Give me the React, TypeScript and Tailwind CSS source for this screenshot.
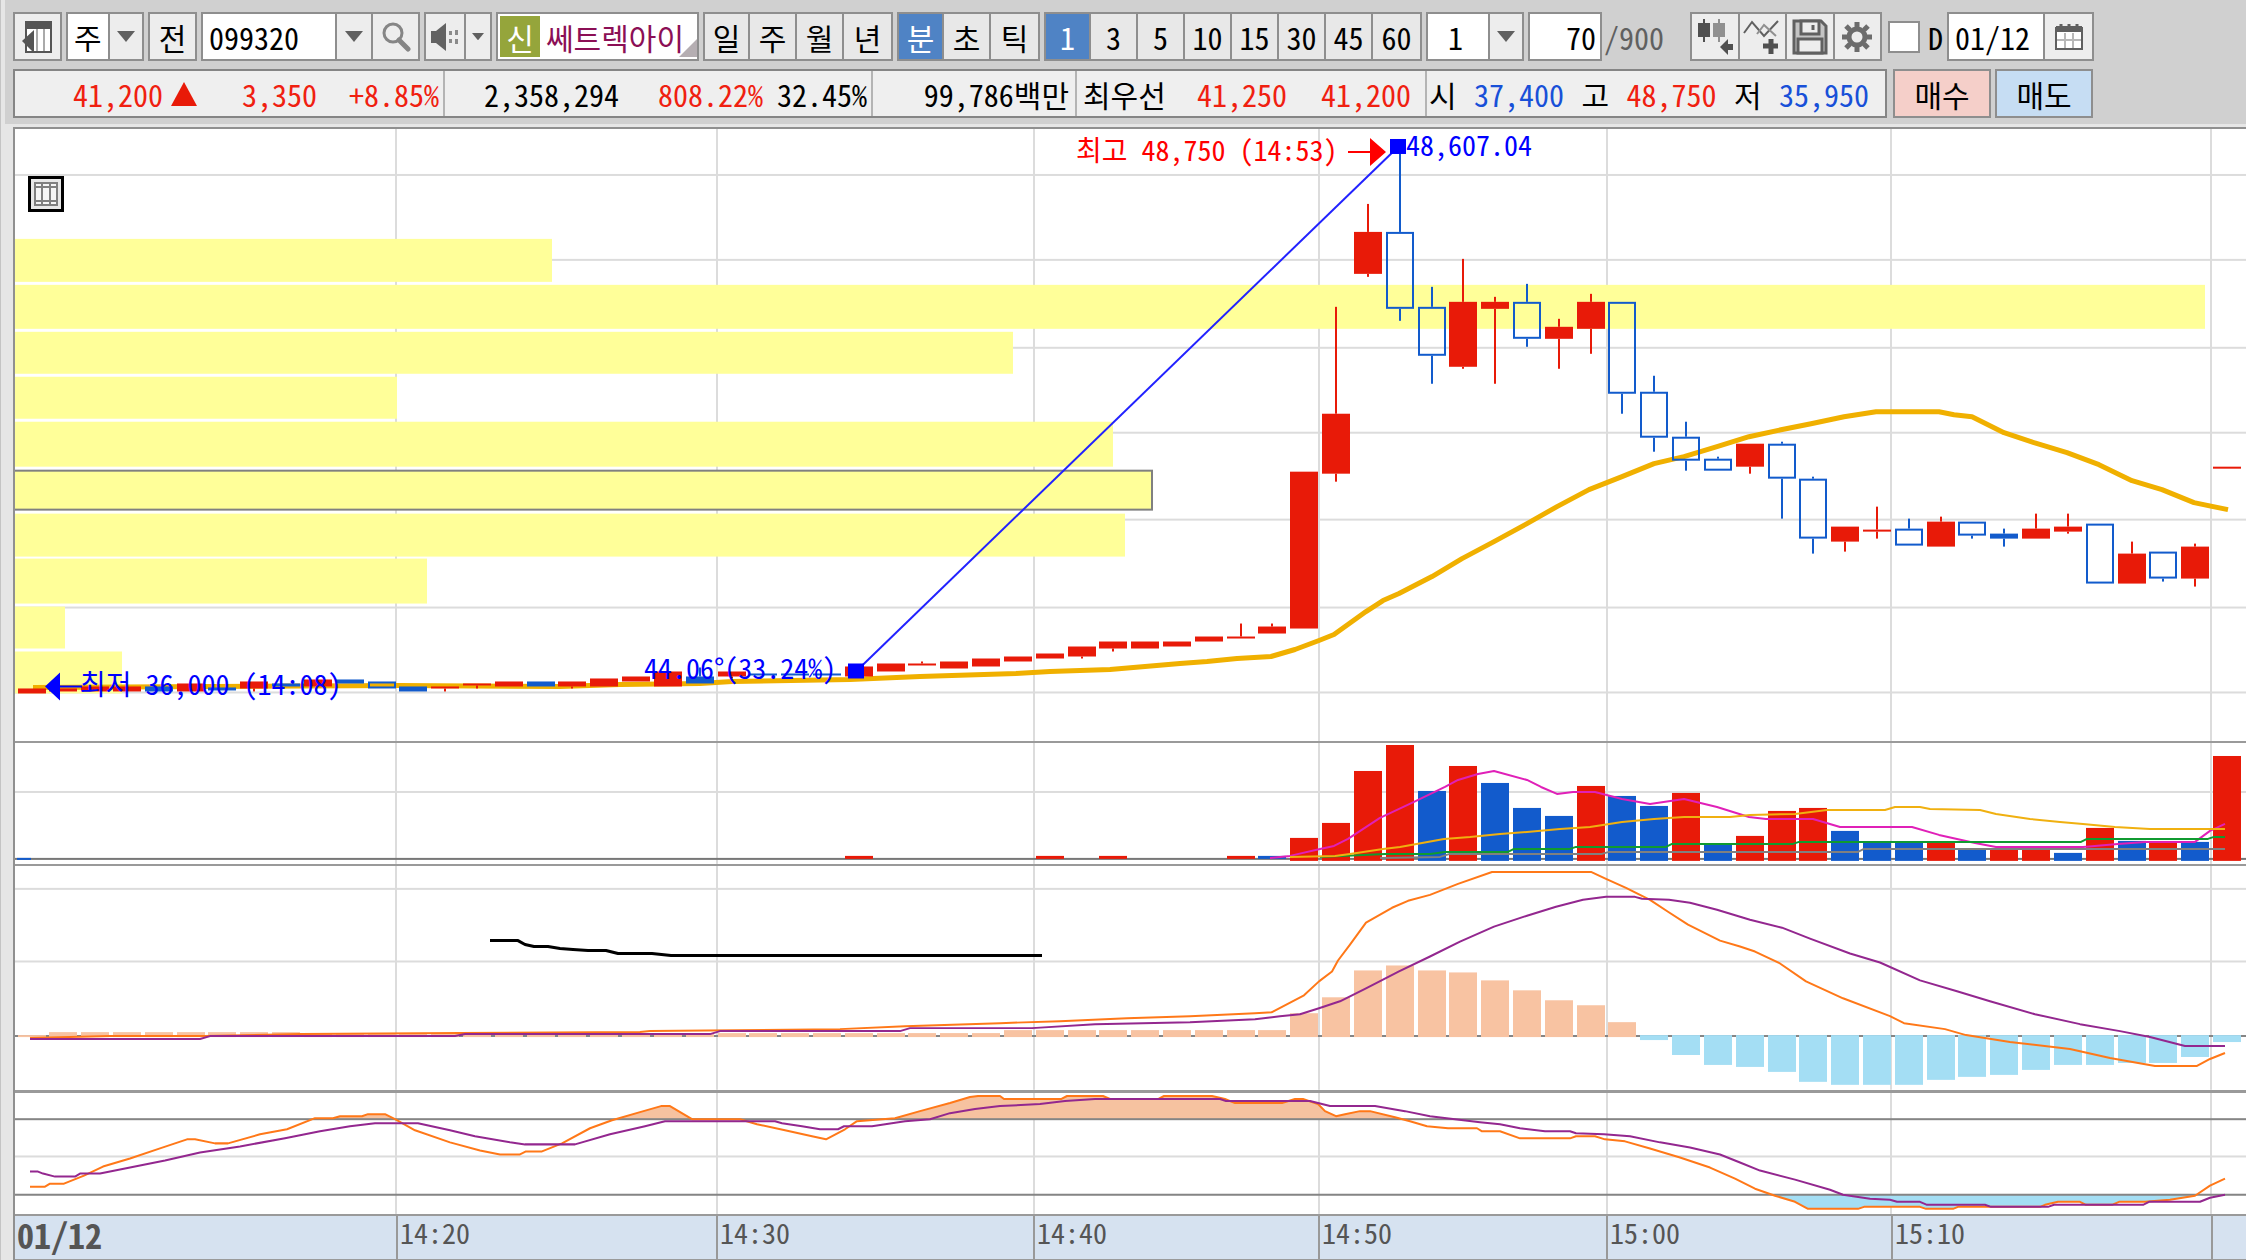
import React from "react";

type Pt = [number, number];

const X0 = 15;
const X1 = 2246;
const W = X1 - X0;

const RED = "#e81a08";
const BLUE = "#125bcc";
const GRID = "#dcdcdc";

const gridX = [396, 717, 1034, 1319, 1607, 1891, 2211];

const center = (i: number) => Math.round(31.5 + (i * (2227 - 31.5)) / 69);

/* Candles: [kind, bodyTop, bodyBottom, wickTop, wickBottom]; r = red, b = solid blue, h = hollow blue */
type Candle = ["r" | "b" | "h", number, number, number, number];
const candles: Candle[] = [
  ["r", 689, 694, 689, 694], ["r", 689, 692, 689, 692], ["r", 687, 692, 687, 692], ["r", 687, 692, 687, 692],
  ["b", 687, 692, 687, 692], ["r", 684, 692, 684, 692], ["b", 688, 691, 688, 691], ["r", 682, 689, 682, 692],
  ["b", 684, 687, 684, 687], ["r", 680, 687, 680, 687], ["b", 680, 684, 680, 684], ["h", 682, 689, 682, 689],
  ["b", 687, 692, 687, 692], ["r", 687, 689, 687, 692], ["r", 684, 686, 684, 689], ["r", 682, 687, 682, 687],
  ["b", 682, 687, 682, 687], ["r", 682, 687, 682, 689], ["r", 679, 687, 679, 687], ["r", 677, 682, 677, 682],
  ["r", 672, 687, 672, 687], ["b", 677, 684, 668, 684], ["r", 672, 677, 672, 679], ["b", 674, 676, 674, 676],
  ["b", 674, 676, 674, 676], ["b", 674, 676, 674, 676], ["r", 667, 677, 667, 677], ["r", 664, 672, 664, 672],
  ["r", 664, 666, 662, 666], ["r", 662, 669, 662, 669], ["r", 659, 667, 659, 667], ["r", 657, 662, 657, 662],
  ["r", 654, 659, 654, 659], ["r", 647, 657, 647, 659], ["r", 642, 649, 642, 652], ["r", 642, 649, 642, 649],
  ["r", 642, 647, 642, 647], ["r", 637, 642, 637, 642], ["r", 637, 639, 624, 639], ["r", 627, 634, 624, 634],
  ["r", 472, 629, 472, 629], ["r", 414, 474, 307, 482], ["r", 232, 274, 204, 277], ["h", 232, 309, 150, 321],
  ["h", 307, 356, 287, 384], ["r", 302, 367, 259, 369], ["r", 302, 309, 297, 384], ["h", 302, 339, 284, 347],
  ["r", 327, 339, 319, 369], ["r", 302, 329, 294, 354], ["h", 302, 394, 302, 414], ["h", 392, 438, 376, 452],
  ["h", 437, 461, 422, 471], ["h", 459, 471, 457, 471], ["r", 444, 467, 444, 474], ["h", 444, 479, 442, 519],
  ["h", 479, 539, 477, 554], ["r", 527, 542, 527, 552], ["r", 530, 532, 507, 539], ["h", 529, 546, 519, 546],
  ["r", 522, 547, 517, 547], ["h", 522, 536, 522, 539], ["b", 534, 539, 529, 547], ["r", 529, 539, 514, 539],
  ["r", 527, 532, 514, 534], ["h", 524, 584, 524, 584], ["r", 554, 584, 542, 584], ["h", 552, 579, 552, 582],
  ["r", 547, 579, 544, 587], ["r", 467, 469, 467, 469],
];

/* Price distribution: [top, bottom, right, outlined] */
const profile: [number, number, number, boolean][] = [
  [239, 282, 552, false], [285, 329, 2205, false], [332, 374, 1013, false], [377, 419, 397, false],
  [422, 467, 1113, false], [471, 510, 1152, true], [514, 557, 1125, false], [559, 604, 427, false],
  [607, 649, 65, false], [652, 694, 122, false],
];

const movingAverage: Pt[] = [
  [33, 688], [400, 686], [560, 687], [620, 685], [700, 684], [732, 682], [850, 680], [920, 677], [1016, 674], [1050, 672],
  [1110, 670], [1145, 667], [1180, 664], [1207, 662], [1237, 659], [1271, 657], [1295, 650], [1319, 641], [1334, 635],
  [1366, 612], [1383, 601], [1399, 594], [1432, 577], [1462, 559], [1494, 542], [1527, 524], [1557, 507], [1589, 490],
  [1622, 477], [1654, 464], [1684, 457], [1717, 447], [1749, 437], [1781, 430], [1811, 424], [1844, 417], [1876, 412],
  [1939, 412], [1954, 415], [1972, 417], [2004, 433], [2034, 443], [2067, 453], [2099, 465], [2132, 481], [2162, 490],
  [2194, 503], [2228, 510],
];

/* Volume bars: [index, top, colour] */
const volume: [number, number, "r" | "b"][] = [
  [26, 857, "r"], [32, 857, "r"], [34, 857, "r"], [38, 857, "r"], [39, 857, "b"],
  [40, 839, "r"], [41, 824, "r"], [42, 772, "r"], [43, 746, "r"], [44, 792, "b"], [45, 767, "r"], [46, 784, "b"],
  [47, 809, "b"], [48, 817, "b"], [49, 787, "r"], [50, 797, "b"], [51, 807, "b"], [52, 794, "r"], [53, 846, "b"],
  [54, 837, "r"], [55, 812, "r"], [56, 809, "r"], [57, 832, "b"], [58, 843, "b"], [59, 843, "b"], [60, 843, "r"],
  [61, 851, "b"], [62, 851, "r"], [63, 851, "r"], [64, 854, "b"], [65, 829, "r"], [66, 842, "b"], [67, 843, "r"],
  [68, 843, "b"], [69, 757, "r"],
];

const volMagenta: Pt[] = [
  [1270, 859], [1290, 857], [1320, 850], [1334, 847], [1348, 840], [1380, 819], [1414, 803], [1445, 788], [1458, 781],
  [1478, 775], [1494, 772], [1527, 781], [1541, 788], [1557, 795], [1573, 793], [1595, 793], [1622, 800], [1650, 805],
  [1684, 800], [1717, 808], [1749, 818], [1766, 820], [1813, 820], [1840, 828], [1912, 828], [1939, 836], [1975, 844],
  [1996, 848], [2083, 848], [2118, 845], [2145, 843], [2195, 843], [2210, 832], [2225, 825],
];
const volYellow: Pt[] = [
  [1290, 858], [1335, 857], [1350, 855], [1383, 850], [1400, 848], [1444, 840], [1470, 838], [1500, 835], [1527, 833],
  [1560, 830], [1590, 828], [1622, 823], [1654, 820], [1684, 818], [1730, 818], [1750, 816], [1795, 815], [1827, 811],
  [1885, 811], [1895, 808], [1920, 808], [1930, 810], [1980, 811], [1996, 815], [2030, 820], [2060, 823], [2083, 825],
  [2115, 828], [2150, 830], [2225, 830],
];
const volGreen: Pt[] = [
  [1320, 858], [1385, 855], [1430, 855], [1445, 853], [1508, 853], [1514, 850], [1570, 850], [1576, 848], [1666, 848],
  [1672, 845], [1793, 845], [1799, 843], [2081, 843], [2087, 840], [2208, 840], [2214, 838], [2225, 838],
];
const volGray: Pt[] = [
  [1380, 859], [1440, 858], [1450, 855], [1602, 855], [1609, 853], [1858, 853], [1864, 850], [2225, 850],
];

/* Histogram edge for each index, measured from the zero line at 1038 */
const histogram: number[] = [
  1037, 1034, 1034, 1034, 1034, 1034, 1034, 1034, 1034, 1035, 1036, 1036, 1036, 1036, 1036, 1036, 1036, 1035, 1035, 1035,
  1035, 1035, 1035, 1035, 1035, 1035, 1035, 1035, 1035, 1035, 1035, 1032, 1032, 1032, 1032, 1032, 1032, 1032, 1032, 1032,
  1015, 999, 972, 967, 972, 974, 982, 992, 1002, 1007, 1024, 1042, 1057, 1067, 1069, 1074, 1084, 1087, 1087, 1087,
  1082, 1079, 1077, 1072, 1067, 1067, 1065, 1065, 1059, 1044,
];

const macd: Pt[] = [
  [30, 1040], [110, 1038], [205, 1038], [300, 1036], [460, 1035], [640, 1034], [650, 1033], [840, 1031], [905, 1028],
  [1000, 1025], [1060, 1023], [1127, 1020], [1190, 1018], [1255, 1015], [1272, 1014], [1304, 997], [1319, 983],
  [1332, 973], [1338, 962], [1350, 946], [1366, 924], [1392, 909], [1408, 902], [1430, 896], [1458, 885], [1492, 873],
  [1591, 873], [1606, 880], [1626, 889], [1650, 901], [1668, 913], [1688, 926], [1720, 942], [1740, 948], [1755, 953],
  [1780, 965], [1806, 983], [1843, 1000], [1890, 1018], [1904, 1025], [1945, 1031], [1966, 1037], [2010, 1044],
  [2070, 1051], [2110, 1060], [2155, 1068], [2197, 1068], [2210, 1061], [2225, 1055],
];
const signal: Pt[] = [
  [30, 1041], [200, 1041], [210, 1038], [455, 1038], [465, 1036], [710, 1036], [720, 1033], [900, 1033], [910, 1030],
  [1032, 1030], [1095, 1026], [1190, 1024], [1255, 1021], [1280, 1018], [1300, 1016], [1319, 1010], [1340, 1003],
  [1366, 990], [1399, 973], [1430, 958], [1460, 943], [1494, 928], [1527, 917], [1556, 908], [1583, 901], [1606, 898],
  [1635, 898], [1642, 900], [1669, 901], [1690, 904], [1717, 911], [1750, 921], [1782, 929], [1810, 940], [1850, 955],
  [1880, 964], [1920, 982], [1957, 993], [1990, 1003], [2035, 1016], [2080, 1026], [2120, 1033], [2150, 1039],
  [2185, 1048], [2225, 1048],
];
const freehand: Pt[] = [
  [490, 942], [518, 942], [525, 946], [534, 948], [548, 948], [560, 950], [573, 951], [588, 952], [606, 952], [618, 955],
  [652, 955], [671, 957], [1042, 957],
];

const stochK: Pt[] = [
  [30, 1188], [45, 1188], [50, 1185], [64, 1185], [84, 1177], [103, 1168], [130, 1160], [160, 1150], [187, 1141],
  [195, 1141], [215, 1145], [228, 1145], [260, 1136], [287, 1131], [315, 1120], [333, 1120], [340, 1118], [362, 1118],
  [368, 1116], [385, 1116], [395, 1121], [415, 1132], [450, 1144], [480, 1152], [500, 1156], [520, 1156], [526, 1153],
  [542, 1153], [562, 1145], [590, 1130], [612, 1122], [640, 1114], [661, 1108], [670, 1108], [692, 1121], [740, 1121],
  [757, 1126], [785, 1132], [812, 1138], [826, 1141], [845, 1131], [857, 1123], [895, 1120], [920, 1113], [950, 1105],
  [970, 1099], [978, 1098], [1000, 1098], [1004, 1101], [1061, 1101], [1067, 1098], [1103, 1098], [1110, 1101],
  [1158, 1101], [1164, 1098], [1212, 1098], [1225, 1101], [1235, 1105], [1282, 1105], [1295, 1101], [1303, 1101],
  [1318, 1106], [1325, 1113], [1336, 1118], [1345, 1116], [1360, 1113], [1370, 1113], [1395, 1119], [1410, 1123],
  [1427, 1128], [1448, 1130], [1477, 1130], [1482, 1133], [1500, 1133], [1520, 1140], [1570, 1140], [1576, 1138],
  [1595, 1138], [1605, 1141], [1625, 1143], [1650, 1150], [1680, 1159], [1710, 1169], [1735, 1180], [1755, 1190],
  [1775, 1197], [1795, 1203], [1808, 1210], [1858, 1210], [1864, 1208], [1920, 1208], [1926, 1210], [1953, 1210],
  [1958, 1208], [2040, 1208], [2045, 1206], [2058, 1203], [2080, 1203], [2086, 1206], [2112, 1206], [2119, 1203],
  [2145, 1203], [2170, 1201], [2195, 1197], [2210, 1187], [2225, 1180],
];
const stochD: Pt[] = [
  [30, 1173], [38, 1173], [43, 1175], [55, 1178], [75, 1178], [80, 1175], [100, 1175], [130, 1169], [165, 1162],
  [200, 1154], [240, 1148], [285, 1140], [320, 1133], [350, 1128], [375, 1125], [418, 1125], [450, 1132], [475, 1138],
  [510, 1144], [525, 1146], [575, 1146], [610, 1136], [645, 1128], [665, 1123], [775, 1123], [782, 1125], [802, 1128],
  [820, 1131], [838, 1131], [844, 1128], [872, 1128], [905, 1123], [930, 1121], [950, 1115], [975, 1111], [1000, 1108],
  [1040, 1106], [1065, 1103], [1095, 1101], [1220, 1101], [1226, 1103], [1310, 1103], [1318, 1105], [1330, 1108],
  [1375, 1108], [1405, 1113], [1430, 1118], [1455, 1121], [1480, 1124], [1500, 1126], [1520, 1130], [1545, 1133],
  [1570, 1133], [1576, 1135], [1604, 1136], [1630, 1138], [1660, 1144], [1690, 1149], [1720, 1156], [1740, 1164],
  [1760, 1172], [1795, 1181], [1830, 1191], [1843, 1196], [1870, 1200], [1890, 1201], [1897, 1203], [1920, 1203],
  [1927, 1206], [1985, 1206], [1991, 1208], [2048, 1208], [2054, 1206], [2143, 1206], [2149, 1203], [2200, 1203],
  [2210, 1199], [2225, 1196],
];

const pts = (p: Pt[]) => p.map((q) => q.join(",")).join(" ");

function Line({ data, color, width = 2 }: { data: Pt[]; color: string; width?: number }) {
  return <polyline points={pts(data)} fill="none" stroke={color} strokeWidth={width} strokeLinejoin="round" />;
}

function Pane({
  label, top, bottom, rows, children,
}: {
  label: string; top: number; bottom: number; rows: number[]; children: React.ReactNode;
}) {
  return (
    <svg
      role="img"
      aria-label={label}
      viewBox={`${X0} ${top} ${W} ${bottom - top}`}
      preserveAspectRatio="none"
      className="block h-full min-h-0 w-full"
    >
      {gridX.map((x) => (
        <rect key={x} x={x - 1} y={top} width={2} height={bottom - top} fill={GRID} />
      ))}
      {rows.map((y) => (
        <rect key={y} x={X0} y={y - 1} width={W} height={2} fill={GRID} />
      ))}
      {children}
    </svg>
  );
}

function PricePane() {
  return (
    <Pane label="가격 차트" top={129} bottom={742} rows={[175, 260, 348, 433, 520, 608, 693]}>
      {profile.map(([t, b, r, outlined]) => (
        <rect
          key={t}
          x={outlined ? X0 - 2 : X0}
          y={t}
          width={r - X0 + (outlined ? 2 : 0)}
          height={b - t}
          fill="#ffff99"
          stroke={outlined ? "#808080" : "none"}
          strokeWidth={2}
        />
      ))}
      <Line data={movingAverage} color="#f0b000" width={5} />
      {candles.map(([k, t, b, wt, wb], i) => {
        const c = center(i);
        const color = k === "r" ? RED : BLUE;
        return (
          <g key={i}>
            {wt < t && <rect x={c - 1} y={wt} width={2} height={t - wt} fill={color} />}
            {wb > b && <rect x={c - 1} y={b} width={2} height={wb - b} fill={color} />}
            {k === "h" ? (
              <rect x={c - 13} y={t + 1} width={26} height={b - t - 2} fill="none" stroke={BLUE} strokeWidth={2} />
            ) : (
              <rect x={c - 14} y={t} width={28} height={b - t} fill={color} />
            )}
          </g>
        );
      })}
      <line x1={856} y1={672} x2={1398} y2={147} stroke="#2222ff" strokeWidth={2} />
      <rect x={848} y={664} width={16} height={15} fill="#0000ff" />
      <rect x={1390} y={139} width={16} height={15} fill="#0000ff" />
      <path d="M1348 151h22v-13l16 14-16 14v-13h-22z" fill="#ff0000" />
      <path d="M45 687l15-14v13h22v2H60v13z" fill="#0000ff" />
    </Pane>
  );
}

function VolumePane() {
  return (
    <Pane label="거래량" top={744} bottom={865} rows={[793]}>
      <rect x={X0} y={859} width={W} height={2} fill="#777777" />
      <rect x={17} y={859} width={14} height={2} fill={BLUE} />
      {volume.map(([i, t, k]) => (
        <rect key={i} x={center(i) - 14} y={t} width={28} height={(t === 857 ? 860 : 862) - t} fill={k === "r" ? RED : BLUE} />
      ))}
      <Line data={volMagenta} color="#e020b8" />
      <Line data={volGray} color="#808080" />
      <Line data={volGreen} color="#109a30" />
      <Line data={volYellow} color="#f0b010" />
    </Pane>
  );
}

function MacdPane() {
  return (
    <Pane label="MACD" top={867} bottom={1092} rows={[890, 963]}>
      <line x1={X0} x2={X1} y1={1038} y2={1038} stroke="#858585" strokeWidth={2} />
      {histogram.map((v, i) => (
        <rect
          key={i}
          x={center(i) - 14}
          y={v < 1038 ? v : 1037}
          width={28}
          height={v < 1038 ? 1039 - v : v - 1037}
          fill={v < 1038 ? "#f8c3a2" : "#a4def4"}
        />
      ))}
      <Line data={macd} color="#ff7818" />
      <Line data={signal} color="#93278f" />
      <Line data={freehand} color="#000000" width={3} />
    </Pane>
  );
}

function StochPane() {
  return (
    <Pane label="스토캐스틱" top={1095} bottom={1215} rows={[1158]}>
      <clipPath id="over">
        <rect x={X0} y={1095} width={W} height={26} />
      </clipPath>
      <clipPath id="under">
        <rect x={X0} y={1196} width={W} height={19} />
      </clipPath>
      <polygon points={`30,1121 ${pts(stochK)} 2225,1121`} fill="#f6c2a0" clipPath="url(#over)" />
      <polygon points={`30,1196 ${pts(stochK)} 2225,1196`} fill="#a4def4" clipPath="url(#under)" />
      <rect x={X0} y={1120} width={W} height={2} fill="#858585" />
      <rect x={X0} y={1195} width={W} height={2} fill="#858585" />
      <Line data={stochK} color="#ff7818" />
      <Line data={stochD} color="#93278f" />
    </Pane>
  );
}

/* ---------- toolbar ---------- */

const box = "flex h-[49px] shrink-0 border-2 border-[#8e8e8e] bg-[#ededed]";
const cell = "flex shrink-0 items-center justify-center border-[#8e8e8e]";

function Arrow({ small = false }: { small?: boolean }) {
  return (
    <svg viewBox="0 0 18 11" className={small ? "w-3" : "w-[18px]"} aria-hidden="true">
      <path d="M0 0h18L9 11z" fill="#606060" />
    </svg>
  );
}

function Drop({ label, value, width, inset }: { label: string; value: string; width: string; inset: string }) {
  return (
    <div className={`${box} relative ${width}`}>
      <select aria-label={label} className={`w-full appearance-none bg-white text-black outline-none ${inset}`}>
        <option>{value}</option>
      </select>
      <span className="pointer-events-none absolute inset-y-0 right-0 flex w-[34px] items-center justify-center border-l-2 border-[#8e8e8e] bg-[#ededed]">
        <Arrow />
      </span>
    </div>
  );
}

function Group({ items, active }: { items: string[]; active?: string }) {
  return (
    <div className={`${box} divide-x-2 divide-[#8e8e8e]`}>
      {items.map((t, i) => (
        <button
          key={t}
          type="button"
          aria-pressed={t === active}
          className={`${cell} ${i === 0 ? "w-[45px]" : "w-[47px]"} ${t === active ? "bg-[#4f83c5] text-white" : "bg-[#e8e8e8]"}`}
        >
          {t}
        </button>
      ))}
    </div>
  );
}

function PanelIcon() {
  return (
    <svg viewBox="0 0 32 34" className="h-[34px] w-8" aria-hidden="true">
      <rect x={4} y={2} width={25} height={30} fill="#fff" stroke="#555" strokeWidth={2} />
      <rect x={3} y={1} width={27} height={8} fill="#555" />
      <path d="M15 9v22M22 9v22" stroke="#aaa" strokeWidth={2} />
      <path d="M0 21L12 10v23z" fill="#555" />
    </svg>
  );
}

function SearchIcon() {
  return (
    <svg viewBox="0 0 30 30" className="w-[30px]" fill="none" aria-hidden="true">
      <circle cx={12} cy={11} r={9} stroke="#858585" strokeWidth={3} />
      <path d="M18 18l9 9" stroke="#858585" strokeWidth={5} strokeLinecap="round" />
    </svg>
  );
}

function SpeakerIcon() {
  return (
    <svg viewBox="0 0 30 30" className="w-[30px]" aria-hidden="true">
      <path d="M1 9h5l10-8v28L6 21H1z" fill="#626262" />
      <path d="M19 9h3v4h-3zM19 17h3v4h-3zM25 8h3v5h-3zM25 17h3v5h-3z" fill="#8a8a8a" />
    </svg>
  );
}

function CandleIcon() {
  return (
    <svg viewBox="0 0 40 38" className="h-[38px] w-10" aria-hidden="true">
      <path d="M9 1v23" stroke="#505050" strokeWidth={2} />
      <rect x={3} y={5} width={12} height={14} fill="#505050" />
      <path d="M24 1v23" stroke="#909090" strokeWidth={2} />
      <rect x={18} y={5} width={12} height={14} fill="#909090" />
      <path d="M25 29l8-8v5h5v6h-5v5z" fill="#505050" />
    </svg>
  );
}

function LinePlusIcon() {
  return (
    <svg viewBox="0 0 40 38" className="h-[38px] w-10" fill="none" aria-hidden="true">
      <path d="M2 15L10 4l12 14L36 3" stroke="#606060" strokeWidth={2} />
      <path d="M15 16l7-9 12 11" stroke="#909090" strokeWidth={2} />
      <path d="M29 21v15M21 28h15" stroke="#505050" strokeWidth={5} />
    </svg>
  );
}

function SaveIcon() {
  return (
    <svg viewBox="0 0 36 36" className="w-9" fill="none" stroke="#606060" strokeWidth={3} aria-hidden="true">
      <path d="M2 2h27l5 5v27H2z" fill="#c4c4c4" />
      <path d="M9 2h18v13H9zM6 20h24v14H6z" fill="#ededed" />
      <path d="M21 6v5" />
    </svg>
  );
}

function GearIcon() {
  return (
    <svg viewBox="0 0 32 32" className="w-8" fill="none" stroke="#6c6c6c" aria-hidden="true">
      <circle cx={16} cy={16} r={8} strokeWidth={5} />
      <path d="M16 1v5M16 26v5M1 16h5M26 16h5M5 5l4 4M23 23l4 4M27 5l-4 4M5 27l4-4" strokeWidth={5} />
    </svg>
  );
}

function CalendarIcon() {
  return (
    <svg viewBox="0 0 28 28" className="w-7" fill="none" aria-hidden="true">
      <rect x={1} y={5} width={26} height={21} fill="#fff" stroke="#606060" strokeWidth={2} />
      <path d="M1 3h26v6H1z" fill="#606060" />
      <path d="M6 1v5M14 1v5M22 1v5" stroke="#606060" strokeWidth={3} />
      <path d="M10 10v15M18 10v15M2 17h24" stroke="#b8b8b8" strokeWidth={2} />
    </svg>
  );
}

function Toolbar() {
  return (
    <div className="flex items-center gap-1">
      <button type="button" aria-label="패널 접기" className={`${box} w-[49px] items-center justify-center`}>
        <PanelIcon />
      </button>
      <Drop label="종목 구분" value="주" width="w-[78px]" inset="pl-1.5" />
      <button type="button" className={`${box} w-[49px] items-center justify-center`}>전</button>
      <div className={`${box} w-[219px] divide-x-2 divide-[#8e8e8e]`}>
        <input aria-label="종목코드" defaultValue="099320" className="w-[134px] bg-white pl-1.5 outline-none" />
        <button type="button" aria-label="최근 종목" className={`${cell} w-9`}><Arrow /></button>
        <button type="button" aria-label="종목 검색" className={`${cell} grow`}><SearchIcon /></button>
      </div>
      <div className={`${box} w-[68px] divide-x-2 divide-[#8e8e8e]`}>
        <button type="button" aria-label="소리" className={`${cell} w-10`}><SpeakerIcon /></button>
        <button type="button" aria-label="소리 설정" className={`${cell} grow`}><Arrow small /></button>
      </div>
      <div className={`${box} relative w-[203px] items-center overflow-hidden bg-white pl-0.5`}>
        <span className="flex h-[41px] w-10 shrink-0 items-center justify-center bg-[#95a53b] text-white">신</span>
        <span className="pl-1.5 whitespace-nowrap text-[#8b0f55]">쎄트렉아이</span>
        <svg viewBox="0 0 18 18" className="absolute right-0 bottom-0.5 w-[18px]" aria-hidden="true">
          <path d="M18 0v18H0z" fill="#b5aeb2" />
        </svg>
      </div>
      <Group items={["일", "주", "월", "년"]} />
      <Group items={["분", "초", "틱"]} active="분" />
      <Group items={["1", "3", "5", "10", "15", "30", "45", "60"]} active="1" />
      <Drop label="분 단위" value="1" width="w-[98px]" inset="pl-5" />
      <div className="flex shrink-0 items-center">
        <input aria-label="조회 개수" defaultValue="70" className="h-[49px] w-[74px] border-2 border-[#8e8e8e] bg-white pr-1 text-right outline-none" />
        <span className="w-[84px] pl-0.5 text-[#606060]">/900</span>
      </div>
      <div className={`${box} w-[192px] divide-x-2 divide-[#8e8e8e]`}>
        <button type="button" aria-label="차트 유형" className={`${cell} flex-1`}><CandleIcon /></button>
        <button type="button" aria-label="지표 추가" className={`${cell} flex-1`}><LinePlusIcon /></button>
        <button type="button" aria-label="저장" className={`${cell} flex-1`}><SaveIcon /></button>
        <button type="button" aria-label="설정" className={`${cell} flex-1`}><GearIcon /></button>
      </div>
      <label className="flex shrink-0 items-center gap-2 pl-0.5">
        <input type="checkbox" className="h-8 w-8 appearance-none border-2 border-[#8e8e8e] bg-white" />
        D
      </label>
      <div className={`${box} w-[147px] divide-x-2 divide-[#8e8e8e]`}>
        <input aria-label="일자" defaultValue="01/12" className="w-[96px] bg-white pl-1.5 outline-none" />
        <button type="button" aria-label="달력" className={`${cell} grow`}><CalendarIcon /></button>
      </div>
    </div>
  );
}

const up = "text-[#f02010]";
const down = "text-[#1850d8]";

function Quotes() {
  return (
    <div className="flex items-center gap-1">
      <div className="mr-0.5 flex h-[49px] shrink-0 items-stretch divide-x-2 divide-[#b4b4b4] border-2 border-[#858585] bg-[#efefef] *:flex *:shrink-0 *:items-center">
        <div className={`w-[430px] ${up}`}>
          <span className="w-[148px] text-right">41,200</span>
          <svg viewBox="0 0 26 24" className="ml-2 w-[26px]" aria-label="상승"><path d="M13 0l13 24H0z" fill="#e81a08" /></svg>
          <span className="w-[120px] text-right">3,350</span>
          <span className="grow pr-1 text-right">+8.85%</span>
        </div>
        <div className="w-[428px]">
          <span className="w-[174px] text-right">2,358,294</span>
          <span className={`w-[144px] text-right ${up}`}>808.22%</span>
          <span className="grow pr-1 text-right">32.45%</span>
        </div>
        <div className="w-[204px] justify-end pr-1.5">99,786백만</div>
        <div className="w-[350px] pl-1.5">
          <span>최우선</span>
          <span className={`grow text-right ${up}`}>41,250</span>
          <span className={`mr-3.5 w-[124px] text-right ${up}`}>41,200</span>
        </div>
        <dl className="w-[458px] justify-between pr-4 pl-0.5">
          <dt>시</dt>
          <dd className={down}>37,400</dd>
          <dt>고</dt>
          <dd className={up}>48,750</dd>
          <dt>저</dt>
          <dd className={down}>35,950</dd>
        </dl>
      </div>
      <button type="button" className="h-[49px] w-[98px] shrink-0 border-2 border-[#8e8e8e] bg-[#f5cfc9]">매수</button>
      <button type="button" className="h-[49px] w-[98px] shrink-0 border-2 border-[#8e8e8e] bg-[#c6ddf3]">매도</button>
    </div>
  );
}

/* ---------- overlays on the price pane, placed by chart coordinate ---------- */

function Note({ x, y, color, children }: { x: number; y: number; color: string; children: string }) {
  return (
    <span
      className={`absolute -translate-y-1/2 text-[28px] leading-none whitespace-nowrap ${color}`}
      style={{ left: `${((x - X0) / W) * 100}%`, top: `${((y - 129) / 614) * 100}%` }}
    >
      {children}
    </span>
  );
}

export default function App() {
  return (
    <div className="flex h-screen min-h-[900px] flex-col overflow-hidden border-l border-[#c4c4c4] bg-[#e6e6e6] pl-1 font-['Noto_Sans_Mono_CJK_KR','Noto_Sans_CJK_KR',sans-serif] text-[30px] leading-none text-black">
      <header className="flex shrink-0 flex-col gap-2 bg-[#d0d0d0] pt-3 pb-1.5 pl-2">
        <Toolbar />
        <Quotes />
      </header>
      <main className="mt-[3px] ml-2 grid min-h-0 grow grid-rows-[615fr_123fr_227fr_123fr_44px] border-t-2 border-l-2 border-[#909090] bg-white *:min-h-0 *:border-[#9a9a9a]">
        <section className="relative border-b-2">
          <PricePane />
          <Note x={1076} y={149} color="text-[#ff0000]">최고 48,750 (14:53)</Note>
          <Note x={1406} y={144} color="text-[#0000ff]">48,607.04</Note>
          <Note x={644} y={668} color="text-[#0000ff]">44.06°(33.24%)</Note>
          <Note x={80} y={684} color="text-[#0000ff]">최저 36,000 (14:08)</Note>
          <button
            type="button"
            aria-label="데이터 표"
            className="absolute top-[47px] left-[13px] flex h-9 w-9 items-center justify-center border-[3px] border-black bg-[#e8e8e8]"
          >
            <svg viewBox="0 0 24 24" className="w-6" fill="none" stroke="#808080" strokeWidth={2} aria-hidden="true">
              <rect x={1} y={1} width={22} height={22} fill="#f6f6f6" />
              <path d="M1 5h22M1 19h22M8 1v22M16 1v22" />
            </svg>
          </button>
        </section>
        <section className="border-b-2"><VolumePane /></section>
        <section className="border-b-[3px]"><MacdPane /></section>
        <section className="border-b-2"><StochPane /></section>
        <footer className="grid grid-cols-[381fr_320fr_317fr_285fr_288fr_285fr_320fr_35fr] border-b border-[#aaaaaa] bg-[#d6e2f0] text-[28px] text-[#555555] *:border-[#999999] *:pt-0.5">
          <span className="pl-0.5 text-[34px] font-bold">01/12</span>
          <span className="border-l-2 pl-0.5">14:20</span>
          <span className="border-l-2 pl-0.5">14:30</span>
          <span className="border-l-2 pl-0.5">14:40</span>
          <span className="border-l-2 pl-0.5">14:50</span>
          <span className="border-l-2 pl-0.5">15:00</span>
          <span className="border-l-2 pl-0.5">15:10</span>
          <span className="border-l-2" />
        </footer>
      </main>
    </div>
  );
}
